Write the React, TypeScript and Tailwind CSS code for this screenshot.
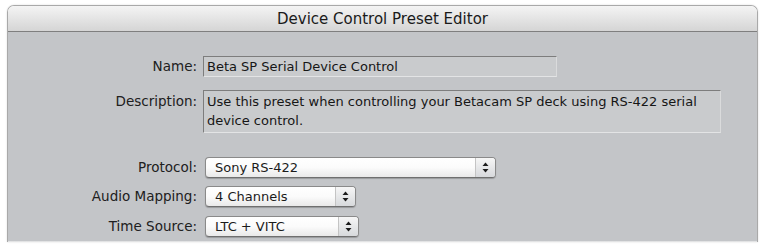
import React from "react";

const font = "font-['DejaVu_Sans',sans-serif]";

function Arrows() {
    return (
        <svg width="7" height="11" viewBox="0 0 7 11">
            <path d="M3.5 0.5 L6.5 4 L0.5 4 Z" fill="#1c1c1c" />
            <path d="M3.5 10.5 L6.5 7 L0.5 7 Z" fill="#1c1c1c" />
        </svg>
    );
}

function Popup({ value, width }: { value: string; width: string }) {
    return (
        <div
            className={`${width} flex h-[21px] rounded-[4px] border border-[#8a8a8a] border-b-[#6f6f6f] bg-gradient-to-b from-white via-[#fbfbfb] to-[#e9e9e9] shadow-[0_1px_1px_rgba(0,0,0,0.22)] overflow-hidden`}
        >
            <span className="flex-1 pl-[9px] leading-[19px] text-[13px] text-[#1b1b1b]">{value}</span>
            <span className="w-[20px] flex items-center justify-center border-l border-[#c4c4c4] bg-gradient-to-b from-[#f6f6f6] to-[#d7d9dc]">
                <Arrows />
            </span>
        </div>
    );
}

function Label({ children, className = "" }: { children: React.ReactNode; className?: string }) {
    return (
        <div className={`text-right text-[13.5px] leading-[21px] text-[#202020] ${className}`}>{children}</div>
    );
}

export default function App() {
    return (
        <div className={`w-[765px] h-[248px] bg-white overflow-hidden pt-[5px] px-[7px] ${font}`}>
            <div className="rounded-t-[7px] border border-[#a9a9a9] border-b-0 overflow-hidden shadow-[0_0_2px_rgba(0,0,0,0.15)]">
                <div className="h-[26px] bg-gradient-to-b from-[#f4f4f4] to-[#d5d5d5] border-b border-[#7f7f7f] flex items-center justify-center">
                    <span className="text-[15px] leading-[20px] text-[#1a1a1a]">Device Control Preset Editor</span>
                </div>
                <div className="bg-[#c3c5c8] h-[210px] pt-[24px]">
                    <div className="grid grid-cols-[189px_1fr] gap-x-[6px] items-start">
                        <Label>Name:</Label>
                        <div className="w-[354px] h-[21px] border border-[#7d7d7d] border-b-[#e3e4e5] border-r-[#dadbdc] bg-[#c9cbcd] pl-[3px] text-[13px] leading-[19px] text-[#161616]">
                            Beta SP Serial Device Control
                        </div>

                        <Label className="mt-[13px] pt-[1px]">Description:</Label>
                        <div className="mt-[13px] w-[518px] h-[43px] border border-[#7d7d7d] border-b-[#e3e4e5] border-r-[#dadbdc] bg-[#c9cbcd] pl-[3px] pt-[1px] text-[13px] leading-[19px] text-[#161616]">
                            Use this preset when controlling your Betacam SP deck using RS-422 serial device control.
                        </div>

                        <Label className="mt-[24px]">Protocol:</Label>
                        <div className="mt-[24px] pl-[2px]">
                            <Popup value="Sony RS-422" width="w-[291px]" />
                        </div>

                        <Label className="mt-[8px]">Audio Mapping:</Label>
                        <div className="mt-[8px] pl-[2px]">
                            <Popup value="4 Channels" width="w-[151px]" />
                        </div>

                        <Label className="mt-[9px]">Time Source:</Label>
                        <div className="mt-[9px] pl-[2px]">
                            <Popup value="LTC + VITC" width="w-[154px]" />
                        </div>
                    </div>
                    <div className="mt-[4px] h-[20px] bg-gradient-to-b from-[#e2e3e4] to-[#f6f6f6] pl-[200px] pt-[3px]">
                        <div className="w-[131px] h-[16px] rounded-t-[4px] border border-[#b0b0b0] bg-white" />
                    </div>
                </div>
            </div>
        </div>
    );
}
